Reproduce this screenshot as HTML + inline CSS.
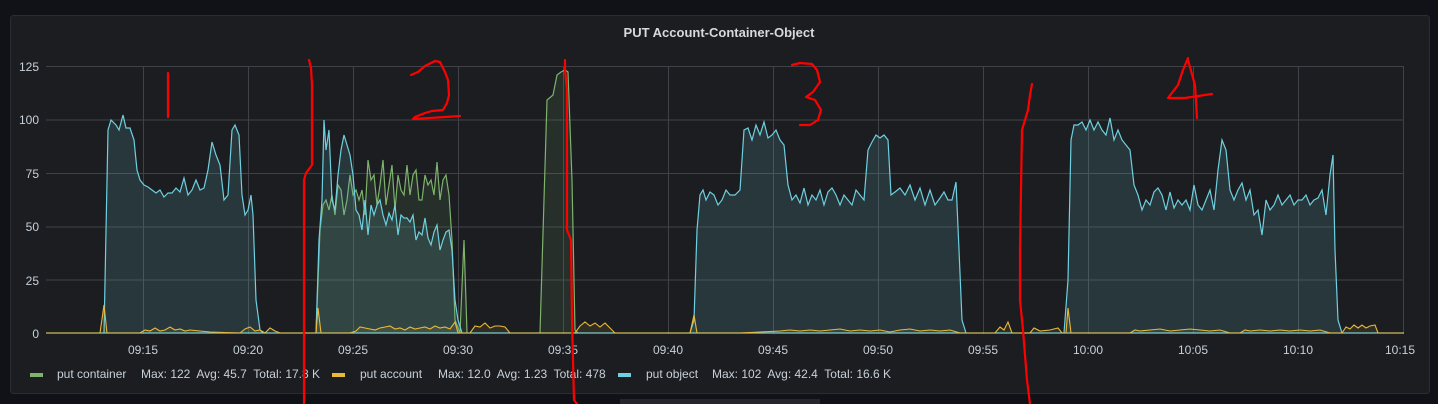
<!DOCTYPE html>
<html><head><meta charset="utf-8"><style>
html,body{margin:0;padding:0;background:#111217;width:1438px;height:404px;overflow:hidden;font-family:"Liberation Sans",sans-serif;}
text{white-space:pre;}
</style></head><body>
<svg width="1438" height="404" xmlns="http://www.w3.org/2000/svg" style="position:absolute;left:0;top:0">
<rect x="0" y="0" width="1438" height="404" fill="#111217"/>
<rect x="10.5" y="15.5" width="1419" height="378" rx="3" fill="#1b1d21" stroke="#2a2c31"/>
<rect x="620" y="399" width="200" height="5" fill="#25272c"/>
<text x="719" y="37" text-anchor="middle" fill="#d8d9da" font-size="13" font-weight="bold">PUT Account-Container-Object</text>
<g stroke="#404247" stroke-width="1">
<line x1="46" y1="66.5" x2="1404" y2="66.5"/><line x1="46" y1="120" x2="1404" y2="120"/><line x1="46" y1="173.5" x2="1404" y2="173.5"/><line x1="46" y1="227" x2="1404" y2="227"/><line x1="46" y1="280" x2="1404" y2="280"/>
<line x1="143.5" y1="66" x2="143.5" y2="334"/><line x1="248.5" y1="66" x2="248.5" y2="334"/><line x1="353.5" y1="66" x2="353.5" y2="334"/><line x1="458.5" y1="66" x2="458.5" y2="334"/><line x1="563.5" y1="66" x2="563.5" y2="334"/><line x1="668.5" y1="66" x2="668.5" y2="334"/><line x1="773.5" y1="66" x2="773.5" y2="334"/><line x1="878.5" y1="66" x2="878.5" y2="334"/><line x1="983.5" y1="66" x2="983.5" y2="334"/><line x1="1088.5" y1="66" x2="1088.5" y2="334"/><line x1="1193.5" y1="66" x2="1193.5" y2="334"/><line x1="1298.5" y1="66" x2="1298.5" y2="334"/><line x1="1403.5" y1="66" x2="1403.5" y2="334"/>
</g>
<g fill="#c7d0d9" font-size="12" text-anchor="end">
<text x="39" y="71">125</text><text x="39" y="124">100</text><text x="39" y="178">75</text><text x="39" y="231">50</text><text x="39" y="285">25</text><text x="39" y="338">0</text>
</g>
<g fill="#c7d0d9" font-size="12" text-anchor="middle">
<text x="143" y="354">09:15</text><text x="248" y="354">09:20</text><text x="353" y="354">09:25</text><text x="458" y="354">09:30</text><text x="563" y="354">09:35</text><text x="668" y="354">09:40</text><text x="773" y="354">09:45</text><text x="878" y="354">09:50</text><text x="983" y="354">09:55</text><text x="1088" y="354">10:00</text><text x="1193" y="354">10:05</text><text x="1298" y="354">10:10</text><text x="1400" y="354">10:15</text>
</g>
<g fill="rgba(126,178,109,0.12)" stroke="#7eb26d" stroke-width="1.2">
<polyline points="316,333 320,230 323,205 326,200 329,210 332,195 335,215 338,185 341,190 344,215 347,200 350,175 353,195 356,190 359,200 362,190 365,215 368,160 371,180 374,175 377,205 380,185 383,160 386,205 389,185 392,165 395,210 398,175 401,190 404,195 407,165 410,195 413,175 416,170 419,200 422,200 425,175 428,185 431,180 434,195 437,162 440,200 443,180 446,175 449,195 452,240 455,320 460,333 464,240 467,333"/>
<polyline points="540,333 547,100 553,95 557,75 561,72 565,70 568,72 572,180 575,330 578,333"/>
</g>
<g fill="rgba(100,180,180,0.18)" stroke="#6ed0e0" stroke-width="1.2">
<polyline points="104,333 108,130 111,120 116,125 119,130 123,115 126,128 130,128 134,140 137,170 140,180 144,185 148,187 152,190 156,193 160,190 164,197 168,193 172,193 176,188 180,192 184,178 188,195 192,190 196,180 200,190 204,188 208,170 212,142 216,155 220,165 224,200 228,195 232,130 235,125 239,135 242,195 245,215 248,210 251,195 253,215 256,300 260,330 263,333"/>
<polyline points="316,333 319,240 322,200 324,120 326,150 329,130 332,200 335,210 338,175 341,150 344,135 347,145 350,155 353,175 356,210 359,215 362,230 365,200 368,235 371,205 374,215 377,205 380,200 383,215 386,225 389,213 392,220 395,205 398,235 401,215 404,218 407,218 410,222 413,215 416,240 419,232 422,235 425,218 428,238 431,245 434,232 437,225 440,250 443,240 446,232 449,230 452,250 455,300 458,320 462,333"/>
<polyline points="690,333 694,320 697,230 700,195 703,190 706,200 710,192 714,195 718,205 722,200 726,190 730,195 735,195 740,190 744,130 748,128 752,140 756,125 760,135 764,122 768,138 772,135 776,130 780,140 784,145 788,185 792,200 796,195 800,203 804,188 808,205 812,195 816,200 820,190 824,205 828,192 832,188 836,195 840,205 844,195 848,200 852,205 856,190 860,195 864,200 868,150 872,142 876,135 880,138 884,135 888,140 891,195 895,192 900,188 905,195 910,185 915,200 920,188 925,205 930,190 935,205 940,198 944,192 948,200 952,200 956,182 959,250 962,320 966,333"/>
<polyline points="1064,333 1068,280 1071,140 1074,125 1078,125 1082,122 1086,130 1090,120 1094,130 1098,122 1102,130 1106,135 1110,118 1114,140 1118,130 1122,140 1126,145 1130,150 1134,185 1138,195 1142,210 1146,200 1150,205 1154,192 1158,188 1162,195 1166,210 1170,192 1174,208 1178,200 1182,205 1186,200 1190,210 1194,185 1198,205 1202,210 1206,200 1210,190 1214,210 1218,170 1222,140 1226,150 1230,190 1234,200 1238,190 1242,183 1246,200 1250,190 1254,215 1258,210 1262,235 1266,200 1270,210 1274,205 1278,195 1282,205 1286,200 1290,195 1294,205 1298,200 1302,200 1306,195 1310,205 1314,200 1318,198 1322,190 1326,215 1330,175 1333,155 1335,250 1338,320 1342,333"/>
<line x1="46" y1="333" x2="1404" y2="333"/>
</g>
<polyline fill="rgba(234,184,57,0.1)" stroke="#eab839" stroke-width="1.1" points="46,333 100,333 104,305 107,333 140,333 145,330 150,331 155,328 160,331 165,330 170,327 175,330 180,329 185,331 190,330 200,331 210,332 240,333 245,329 250,327 255,331 260,330 265,333 270,328 275,331 280,333 316,333 318,308 321,333 350,333 356,331 360,327 365,328 370,329 375,330 380,328 385,327 390,326 395,329 400,328 405,330 410,327 415,329 420,328 425,327 430,329 435,326 440,328 445,327 450,329 455,322 458,333 470,333 475,326 480,327 485,323 490,328 495,326 500,326 505,327 510,333 540,333 575,333 580,326 585,322 590,326 595,323 600,327 605,323 610,328 615,333 690,333 694,315 697,333 740,333 760,332 780,331 790,330 800,331 810,330 820,331 830,330 840,329 850,331 860,330 870,331 880,330 890,332 900,330 910,329 920,331 930,330 940,331 950,330 960,333 995,333 1000,327 1004,330 1008,322 1012,333 1030,333 1034,328 1040,331 1050,330 1058,328 1062,333 1066,333 1068,308 1071,333 1130,333 1135,330 1140,331 1150,330 1160,329 1170,331 1180,330 1190,329 1200,330 1210,331 1220,330 1230,333 1240,333 1245,330 1250,331 1260,330 1270,331 1280,330 1290,331 1300,330 1310,331 1320,330 1330,333 1342,333 1346,327 1350,329 1354,325 1358,328 1362,325 1366,328 1370,326 1375,325 1378,333 1404,333"/>
<rect x="30" y="373" width="13" height="4" fill="#7eb26d"/>
<rect x="332" y="373" width="13" height="4" fill="#eab839"/>
<rect x="618" y="373" width="13" height="4" fill="#6ed0e0"/>
<g fill="#c7d0d9" font-size="12">
<text x="57" y="378">put container</text><text x="141" y="378">Max: 122  Avg: 45.7  Total: 17.8 K</text>
<text x="360" y="378">put account</text><text x="438" y="378">Max: 12.0  Avg: 1.23  Total: 478</text>
<text x="646" y="378">put object</text><text x="712" y="378">Max: 102  Avg: 42.4  Total: 16.6 K</text>
</g>
<g fill="none" stroke="#ff0000" stroke-width="2.2" stroke-linejoin="round" stroke-linecap="round">
<polyline points="168,73 168,117"/>
<polyline points="309,60 311,68 312,85 312,165 306,173 304,180 304,404"/>
<polyline points="411,75 418,72 425,66 435,61 440,62 445,72 448,80 449,95 447,103 443,110 432,111 425,113 415,117 413,119 430,118 445,117 460,116"/>
<polyline points="565,60 565,70 567,90 567,230 571,240 572,320 574,400 577,404"/>
<polyline points="792,65 800,63 812,64 817,70 820,82 813,92 806,97 815,100 821,110 818,120 810,125 800,125"/>
<polyline points="1032,84 1030,95 1028,110 1022,130 1020,250 1020,300 1023,330 1027,380 1030,404"/>
<polyline points="1188,58 1183,70 1178,85 1168,98 1185,98 1198,96 1212,94"/>
<polyline points="1188,60 1195,85 1197,118"/>
</g>
</svg>
</body></html>
